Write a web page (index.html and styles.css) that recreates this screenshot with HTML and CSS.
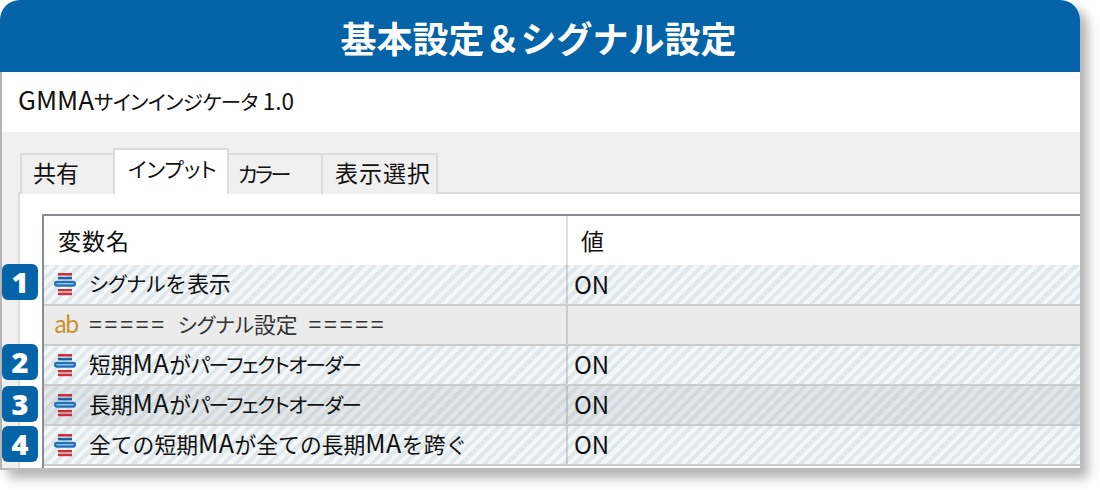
FILE: index.html
```html
<!DOCTYPE html>
<html lang="ja">
<head>
<meta charset="utf-8">
<title>基本設定&#xFF06;シグナル設定</title>
<link rel="stylesheet" href="styles.css">
</head>
<body>
<svg class="defs" width="0" height="0" aria-hidden="true">
  <symbol id="param" viewBox="0 0 22 23">
    <rect x="4" y="0" width="14" height="2.6" fill="#c8323c"/>
    <rect x="4" y="3.8" width="14" height="2.6" fill="#1a5fa8"/>
    <rect x="0" y="7.8" width="22" height="6" rx="3" fill="#1f72b8"/>
    <rect x="2.5" y="10.3" width="17" height="1" fill="#cfe3f2"/>
    <rect x="4" y="16" width="14" height="2.4" fill="#c8323c"/>
    <rect x="4" y="19.6" width="14" height="2.6" fill="#c8323c"/>
  </symbol>
</svg>
<main class="window">
  <header class="banner">基本設定&#xFF06;シグナル設定</header>
  <div class="title"><span class="gmma">GMMA</span><span class="kata compact">サインインジケータ</span> 1.0</div>
  <section class="dialog">
    <nav class="tabs">
      <span class="tab t-share">共有</span>
      <span class="tab t-input"><span class="kata-tab">インプット</span></span>
      <span class="tab t-color"><span class="kata-tab tight">カラー</span></span>
      <span class="tab t-view">表示選択</span>
    </nav>
    <div class="panel">
      <div class="table">
        <div class="row head"><div class="cell name">変数名</div><div class="cell value">値</div></div>
        <div class="row striped first">
          <span class="badge b1">1</span>
          <div class="cell name"><svg class="icon"><use href="#param"/></svg><span class="label"><span class="kata">シグナル</span>を表示</span></div><div class="cell value">ON</div>
        </div>
        <div class="row plain">
          <div class="cell name"><span class="ab">ab</span><span class="label spaced"><span class="eq">=====</span> <span class="kata">シグナル</span>設定 <span class="eq">=====</span></span></div><div class="cell value"></div>
        </div>
        <div class="row striped">
          <span class="badge b2">2</span>
          <div class="cell name"><svg class="icon"><use href="#param"/></svg><span class="label">短期<span class="lat">MA</span>が<span class="kata long">パーフェクトオーダー</span></span></div><div class="cell value">ON</div>
        </div>
        <div class="row striped dark">
          <span class="badge">3</span>
          <div class="cell name"><svg class="icon"><use href="#param"/></svg><span class="label">長期<span class="lat">MA</span>が<span class="kata long">パーフェクトオーダー</span></span></div><div class="cell value">ON</div>
        </div>
        <div class="row striped">
          <span class="badge">4</span>
          <div class="cell name"><svg class="icon"><use href="#param"/></svg><span class="label">全ての短期<span class="lat">MA</span>が全ての長期<span class="lat">MA</span>を跨ぐ</span></div><div class="cell value">ON</div>
        </div>
      </div>
    </div>
  </section>
</main>
</body>
</html>
```
FILE: styles.css
```css
* { box-sizing: border-box; }
html, body { margin: 0; padding: 0; background: #fff; }
body {
  width: 1100px;
  height: 490px;
  overflow: hidden;
  font-family: "Noto Sans CJK JP", "Noto Sans", sans-serif;
  color: #111;
}
.defs { position: absolute; }
.window {
  width: 1080px;
  height: 470px;
  border-radius: 20px 20px 0 0;
  box-shadow: 8px 8px 12px rgba(0, 0, 0, .3);
  display: flex;
  flex-direction: column;
  background: #f0f0f0;
  border-bottom: 2px solid #bbb;
}
.banner {
  height: 72px;
  flex: none;
  background: #0563a8;
  border-radius: 20px 20px 0 0;
  color: #fff;
  font-size: 36px;
  font-weight: 700;
  line-height: 74px;
  text-align: center;
  padding-right: 3px;
}
.title {
  height: 60px;
  flex: none;
  background: #fff;
  border-left: 2px solid #b5b5b5;
  padding-left: 16px;
  font-size: 22.5px;
  line-height: 56px;
  white-space: pre;
}
.gmma { font-size: 26px; line-height: 1; }
.kata { font-size: 20.5px; font-feature-settings: "palt"; }
.kata.long { letter-spacing: -1.5px; }
.kata.compact { letter-spacing: -.6px; }
.kata-tab { font-size: 21px; font-feature-settings: "palt"; }
.kata-tab.tight { letter-spacing: -2.5px; }
.lat { font-size: 25px; letter-spacing: .5px; line-height: 1; }
.eq { font-size: 23px; letter-spacing: 2.8px; font-feature-settings: "palt"; line-height: 1; }
.dialog {
  flex: 1;
  min-height: 0;
  border-left: 2px solid #b5b5b5;
  padding: 16px 0 0 16px;
  display: flex;
  flex-direction: column;
}
.tabs {
  height: 46px;
  flex: none;
  display: flex;
  align-items: flex-end;
  margin-bottom: -2px;
  position: relative;
  z-index: 1;
  padding-left: 2px;
}
.tab {
  height: 41px;
  border: 2px solid #dcdcdc;
  border-bottom: 0;
  margin-right: -2px;
  font-size: 23px;
  line-height: 34px;
  background: #f0f0f0;
  white-space: nowrap;
}
.t-share { width: 95px; padding-left: 11px; }
.t-input {
  width: 116px;
  height: 46px;
  padding-left: 13px;
  background: #fff;
  position: relative;
  z-index: 1;
}
.t-color { width: 96px; padding-left: 9px; }
.t-view { width: 117px; padding-left: 12px; letter-spacing: 1px; }
.panel {
  flex: 1;
  min-height: 0;
  background: #fff;
  border-top: 2px solid #dcdcdc;
  border-left: 2px solid #dcdcdc;
  padding: 20px 0 0 22px;
  display: flex;
}
.table {
  flex: 1;
  min-width: 0;
  border-top: 2px solid #888c94;
  border-left: 2px solid #888c94;
}
.row {
  position: relative;
  display: grid;
  grid-template-columns: 524px 1fr;
  height: 40px;
  font-size: 21.8px;
}
.first { height: 41px; }
.cell {
  display: flex;
  align-items: center;
  border-bottom: 2px solid #cbcbcb;
  white-space: pre;
  min-width: 0;
}
.cell.name {
  padding-left: 10px;
  border-right: 2px solid rgba(130, 130, 130, .3);
}
.cell.value { padding: 0 0 3px 6px; font-size: 24px; }
.label { padding-bottom: 4px; }
.spaced { word-spacing: 6px; }
.head { height: 49px; background: #fff; }
.head .cell { border-bottom: 0; padding-bottom: 2px; font-size: 23px; }
.head .cell.name { padding-left: 14px; letter-spacing: 1px; border-right-color: #e2e2e2; }
.head .cell.value { padding-left: 13px; }
.striped {
  background: repeating-linear-gradient(135deg, #e1e8eb 0 4px, #f4f7f8 4px 8px);
}
.dark {
  background: repeating-linear-gradient(135deg, #d3d9dc 0 4px, #e2e7e9 4px 8px);
}
.plain { background: #ebebeb; }
.plain .cell { color: #333; }
.icon { width: 22px; height: 23px; margin-right: 13px; flex: none; }
.ab {
  width: 22px;
  margin-right: 13px;
  padding-bottom: 3px;
  color: #c8912e;
  font-size: 23px;
  letter-spacing: -2px;
  line-height: 1;
  flex: none;
}
.badge {
  position: absolute;
  left: -42px;
  top: 0;
  width: 36px;
  height: 36px;
  border-radius: 6px;
  background: #0563a8;
  color: #fff;
  font: 800 29px/36px "Open Sans", "Noto Sans", sans-serif;
  text-align: center;
}
.b1 { top: -1px; }
.b2 { top: -2px; }
```
